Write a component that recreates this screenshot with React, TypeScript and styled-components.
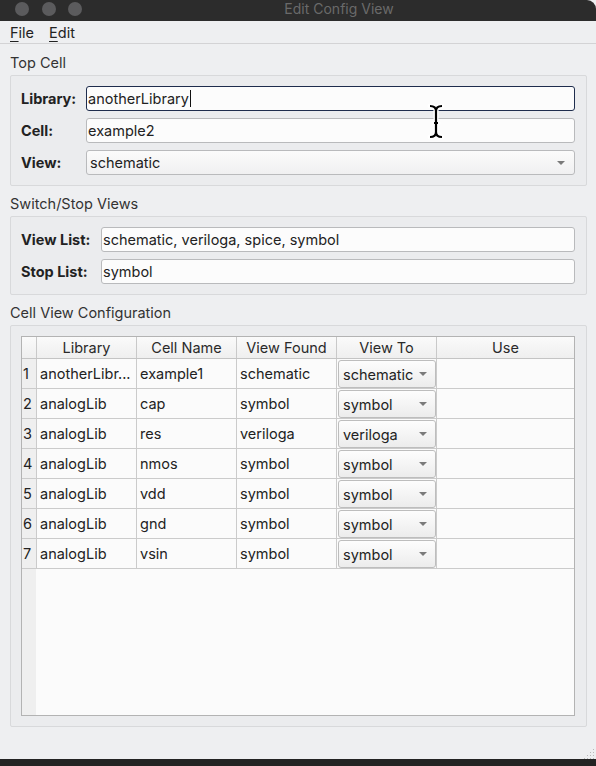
import React from "react";
import styled, { createGlobalStyle } from "styled-components";

const Global = createGlobalStyle`
  html, body {
    margin: 0;
    padding: 0;
    background: #1e1e1e;
  }
  #root {
    width: 596px;
    height: 766px;
  }
`;

const Window = styled.div`
  position: relative;
  width: 596px;
  height: 766px;
  display: flex;
  flex-direction: column;
  background: #eeeff1;
  font-family: Inter, "Noto Sans", "Liberation Sans", sans-serif;
  font-size: 14.5px;
  color: #262626;
  overflow: hidden;
`;

const TitleBar = styled.div`
  height: 21px;
  flex: none;
  background: #2c2c2c;
  border-top-right-radius: 9px;
  display: flex;
  align-items: center;
  padding-left: 15px;
  position: relative;
`;

const Lights = styled.div`
  display: flex;
  gap: 12.5px;
  margin-top: -4px;
`;

const Light = styled.span`
  width: 14px;
  height: 14px;
  border-radius: 50%;
  background: #5b5b5d;
`;

const TitleText = styled.div`
  flex: 1;
  text-align: center;
  margin-top: -5px;
  color: #6a6a6a;
  font-size: 14px;
`;

const MenuBar = styled.div`
  height: 22px;
  flex: none;
  display: flex;
  align-items: center;
  gap: 15px;
  padding-left: 10px;
  border-bottom: 1px solid #d3d3d5;
`;

const MenuItem = styled.span`
  color: #222;
  u {
    text-decoration: underline;
    text-underline-offset: 3px;
  }
`;

const Content = styled.div`
  flex: 1;
  display: flex;
  flex-direction: column;
  padding: 1px 9px 0 10px;
`;

const SectionTitle = styled.div`
  line-height: 17px;
  padding: 9px 0 4px;
  color: #333;
`;

const Group = styled.div<{ $grow?: boolean }>`
  border: 1px solid #d8d9db;
  border-radius: 2px;
  background: #ebecee;
  padding: 10px 11px 10px 10px;
  display: flex;
  flex-direction: column;
  gap: 7px;
  ${(p) => (p.$grow ? "height: 402px; box-sizing: border-box;" : "")}
`;

const FormRow = styled.div<{ $labelWidth: number }>`
  display: grid;
  grid-template-columns: ${(p) => p.$labelWidth}px 1fr;
  align-items: center;
`;

const Label = styled.label`
  font-weight: 700;
  color: #222;
`;

const Field = styled.div<{ $focused?: boolean }>`
  height: 25px;
  box-sizing: border-box;
  border: 1px solid ${(p) => (p.$focused ? "#1f2d4d" : "#b9babc")};
  border-radius: 3px;
  background: #fcfcfc;
  display: flex;
  align-items: center;
  padding-left: 1px;
  color: #222;
`;

const Caret = styled.span`
  display: inline-block;
  width: 1px;
  height: 17px;
  background: #111;
  margin-left: 1px;
`;

const Combo = styled.div`
  height: 25px;
  box-sizing: border-box;
  border: 1px solid #b9babc;
  border-radius: 3px;
  background: linear-gradient(#fbfbfb, #f0f0f1);
  display: flex;
  align-items: center;
  justify-content: space-between;
  padding: 0 9px 0 3px;
  color: #222;
`;

const Arrow = styled.span`
  width: 0;
  height: 0;
  border-left: 4px solid transparent;
  border-right: 4px solid transparent;
  border-top: 4px solid #7a7a7a;
`;

const Table = styled.div`
  flex: 1;
  border: 1px solid #b3b3b3;
  background: linear-gradient(to right, #efefef 14px, #fbfbfb 14px);
  display: flex;
  flex-direction: column;
`;

const cols = "14px 100px 100px 100px 100px 1fr";

const HeadRow = styled.div`
  display: grid;
  grid-template-columns: ${cols};
  height: 21px;
  background: linear-gradient(#fafafa, #efefef);
  border-bottom: 1px solid #c4c4c4;
`;

const HeadCell = styled.div`
  text-align: center;
  line-height: 21px;
  color: #2a2a2a;
  border-left: 1px solid #c9c9c9;
  &:first-child {
    border-left: none;
  }
`;

const BodyRow = styled.div`
  display: grid;
  grid-template-columns: ${cols};
  height: 30px;
  border-bottom: 1px solid #cbcbcb;
  box-sizing: border-box;
`;

const RowNum = styled.div`
  background: #efefef;
  padding-left: 1px;
  line-height: 29px;
  color: #222;
`;

const Cell = styled.div`
  border-left: 1px solid #cbcbcb;
  padding-left: 3px;
  line-height: 29px;
  white-space: nowrap;
  overflow: hidden;
  color: #222;
  background: #fbfbfb;
`;

const ComboCell = styled.div`
  border-left: 1px solid #cbcbcb;
  padding: 1px 0 0 1px;
  background: #fbfbfb;
`;

const MiniCombo = styled.div`
  height: 28px;
  box-sizing: border-box;
  border: 1px solid #bdbdbd;
  border-radius: 3px;
  background: linear-gradient(#fdfdfd, #ececec);
  display: flex;
  align-items: center;
  justify-content: space-between;
  padding: 0 8px 0 4px;
  color: #222;
`;

const BottomBar = styled.div`
  height: 7px;
  flex: none;
  background: #232323;
  margin-top: auto;
`;

const Grip = styled.svg`
  position: absolute;
  right: 1px;
  bottom: 7px;
`;

const Cursor = styled.svg`
  position: absolute;
  left: 427px;
  top: 103px;
`;

const rows = [
  ["anotherLibr...", "example1", "schematic", "schematic"],
  ["analogLib", "cap", "symbol", "symbol"],
  ["analogLib", "res", "veriloga", "veriloga"],
  ["analogLib", "nmos", "symbol", "symbol"],
  ["analogLib", "vdd", "symbol", "symbol"],
  ["analogLib", "gnd", "symbol", "symbol"],
  ["analogLib", "vsin", "symbol", "symbol"],
];

const beam =
  "M3 3 Q9 3 9 8 Q9 3 15 3 M9 8 V29 M3 34 Q9 34 9 29 Q9 34 15 34 M7 20 H11";

export default function App() {
  return (
    <Window>
      <Global />
      <TitleBar>
        <Lights>
          <Light />
          <Light />
          <Light />
        </Lights>
        <TitleText>Edit Config View</TitleText>
      </TitleBar>
      <MenuBar>
        <MenuItem>
          <u>F</u>ile
        </MenuItem>
        <MenuItem>
          <u>E</u>dit
        </MenuItem>
      </MenuBar>
      <Content>
        <SectionTitle>Top Cell</SectionTitle>
        <Group>
          <FormRow $labelWidth={65}>
            <Label>Library:</Label>
            <Field $focused>
              anotherLibrary
              <Caret />
            </Field>
          </FormRow>
          <FormRow $labelWidth={65}>
            <Label>Cell:</Label>
            <Field>example2</Field>
          </FormRow>
          <FormRow $labelWidth={65}>
            <Label>View:</Label>
            <Combo>
              schematic
              <Arrow />
            </Combo>
          </FormRow>
        </Group>

        <SectionTitle>Switch/Stop Views</SectionTitle>
        <Group>
          <FormRow $labelWidth={80}>
            <Label>View List:</Label>
            <Field>schematic, veriloga, spice, symbol</Field>
          </FormRow>
          <FormRow $labelWidth={80}>
            <Label>Stop List:</Label>
            <Field>symbol</Field>
          </FormRow>
        </Group>

        <SectionTitle>Cell View Configuration</SectionTitle>
        <Group $grow>
          <Table>
            <HeadRow>
              <HeadCell />
              <HeadCell>Library</HeadCell>
              <HeadCell>Cell Name</HeadCell>
              <HeadCell>View Found</HeadCell>
              <HeadCell>View To</HeadCell>
              <HeadCell>Use</HeadCell>
            </HeadRow>
            {rows.map((r, i) => (
              <BodyRow key={i}>
                <RowNum>{i + 1}</RowNum>
                <Cell>{r[0]}</Cell>
                <Cell>{r[1]}</Cell>
                <Cell>{r[2]}</Cell>
                <ComboCell>
                  <MiniCombo>
                    {r[3]}
                    <Arrow />
                  </MiniCombo>
                </ComboCell>
                <Cell />
              </BodyRow>
            ))}
          </Table>
        </Group>
      </Content>
      <BottomBar />
      <Grip width="12" height="12" viewBox="0 0 12 12">
        {[
          [10, 2],
          [10, 5],
          [7, 5],
          [10, 8],
          [7, 8],
          [4, 8],
          [10, 11],
          [7, 11],
          [4, 11],
          [1, 11],
        ].map(([x, y], i) => (
          <rect key={i} x={x} y={y} width="1" height="1" fill="#b8b8b8" />
        ))}
      </Grip>
      <Cursor width="18" height="37" viewBox="0 0 18 37">
        <path
          d={beam}
          fill="none"
          stroke="#fff"
          strokeWidth="5"
          strokeLinecap="round"
          strokeLinejoin="round"
        />
        <path d={beam} fill="none" stroke="#000" strokeWidth="2.2" />
      </Cursor>
    </Window>
  );
}
